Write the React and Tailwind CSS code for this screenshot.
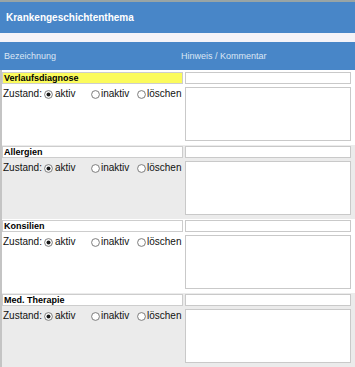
import React from "react";

const Radio = ({ checked }) => (
  <svg width="9" height="9" viewBox="0 0 9 9" className="shrink-0">
    <circle cx="4.5" cy="4.5" r="3.9" fill="white" stroke="#6e6e6e" strokeWidth="0.9" />
    {checked && <circle cx="4.5" cy="4.5" r="2" fill="#1a1a1a" />}
  </svg>
);

const Section = ({ title, gray, yellow }) => (
  <div className={`h-[74px] pt-[1px] ${gray ? "bg-[#ebebeb]" : "bg-white"}`}>
    <div className="flex">
      <div
        className={`w-[181px] h-[12px] border border-[#cdcdcd] pl-[1px] text-[9px] font-bold leading-[10px] text-black ${
          yellow ? "bg-[#fbfb5c]" : "bg-white"
        }`}
      >
        {title}
      </div>
      <div className="ml-[2px] w-[166px] h-[12px] border border-[#c9c9c9] bg-white" />
    </div>
    <div className="flex mt-[3px]">
      <div className="w-[183px] h-[14px] flex items-center text-[10px] leading-none text-[#111]">
        <span className="pl-[1px] w-[42px]">Zustand:</span>
        <span className="flex items-center w-[47px] gap-[2px]">
          <Radio checked />
          <span>aktiv</span>
        </span>
        <span className="flex items-center w-[46px] gap-[1px]">
          <Radio />
          <span>inaktiv</span>
        </span>
        <span className="flex items-center gap-[1px]">
          <Radio />
          <span>löschen</span>
        </span>
      </div>
      <div className="w-[166px] h-[54px] border border-[#c9c9c9] bg-white" />
    </div>
  </div>
);

export default function App() {
  return (
    <div
      className="w-[355px] h-[367px] overflow-hidden bg-white"
      style={{ fontFamily: '"Liberation Sans", Arial, sans-serif' }}
    >
      <div className="h-[2px] bg-[#98a4a5]" />
      <div className="h-[31px] bg-[#4886c8] flex items-center pl-[6px] text-white text-[10px] font-bold">
        Krankengeschichtenthema
      </div>
      <div className="h-[9px] bg-[#f4f3f8]" />
      <div className="h-[28px] bg-[#4886c8] flex items-center text-[9px] text-[#dbe7f5] pt-[2px]">
        <span className="w-[181px] pl-[4px]">Bezeichnung</span>
        <span>Hinweis / Kommentar</span>
      </div>
      <div className="border-l-[2px] border-[#c4c4c4] pt-[1px]">
        <Section title="Verlaufsdiagnose" yellow />
        <Section title="Allergien" gray />
        <Section title="Konsilien" />
        <Section title="Med. Therapie" gray />
      </div>
    </div>
  );
}
